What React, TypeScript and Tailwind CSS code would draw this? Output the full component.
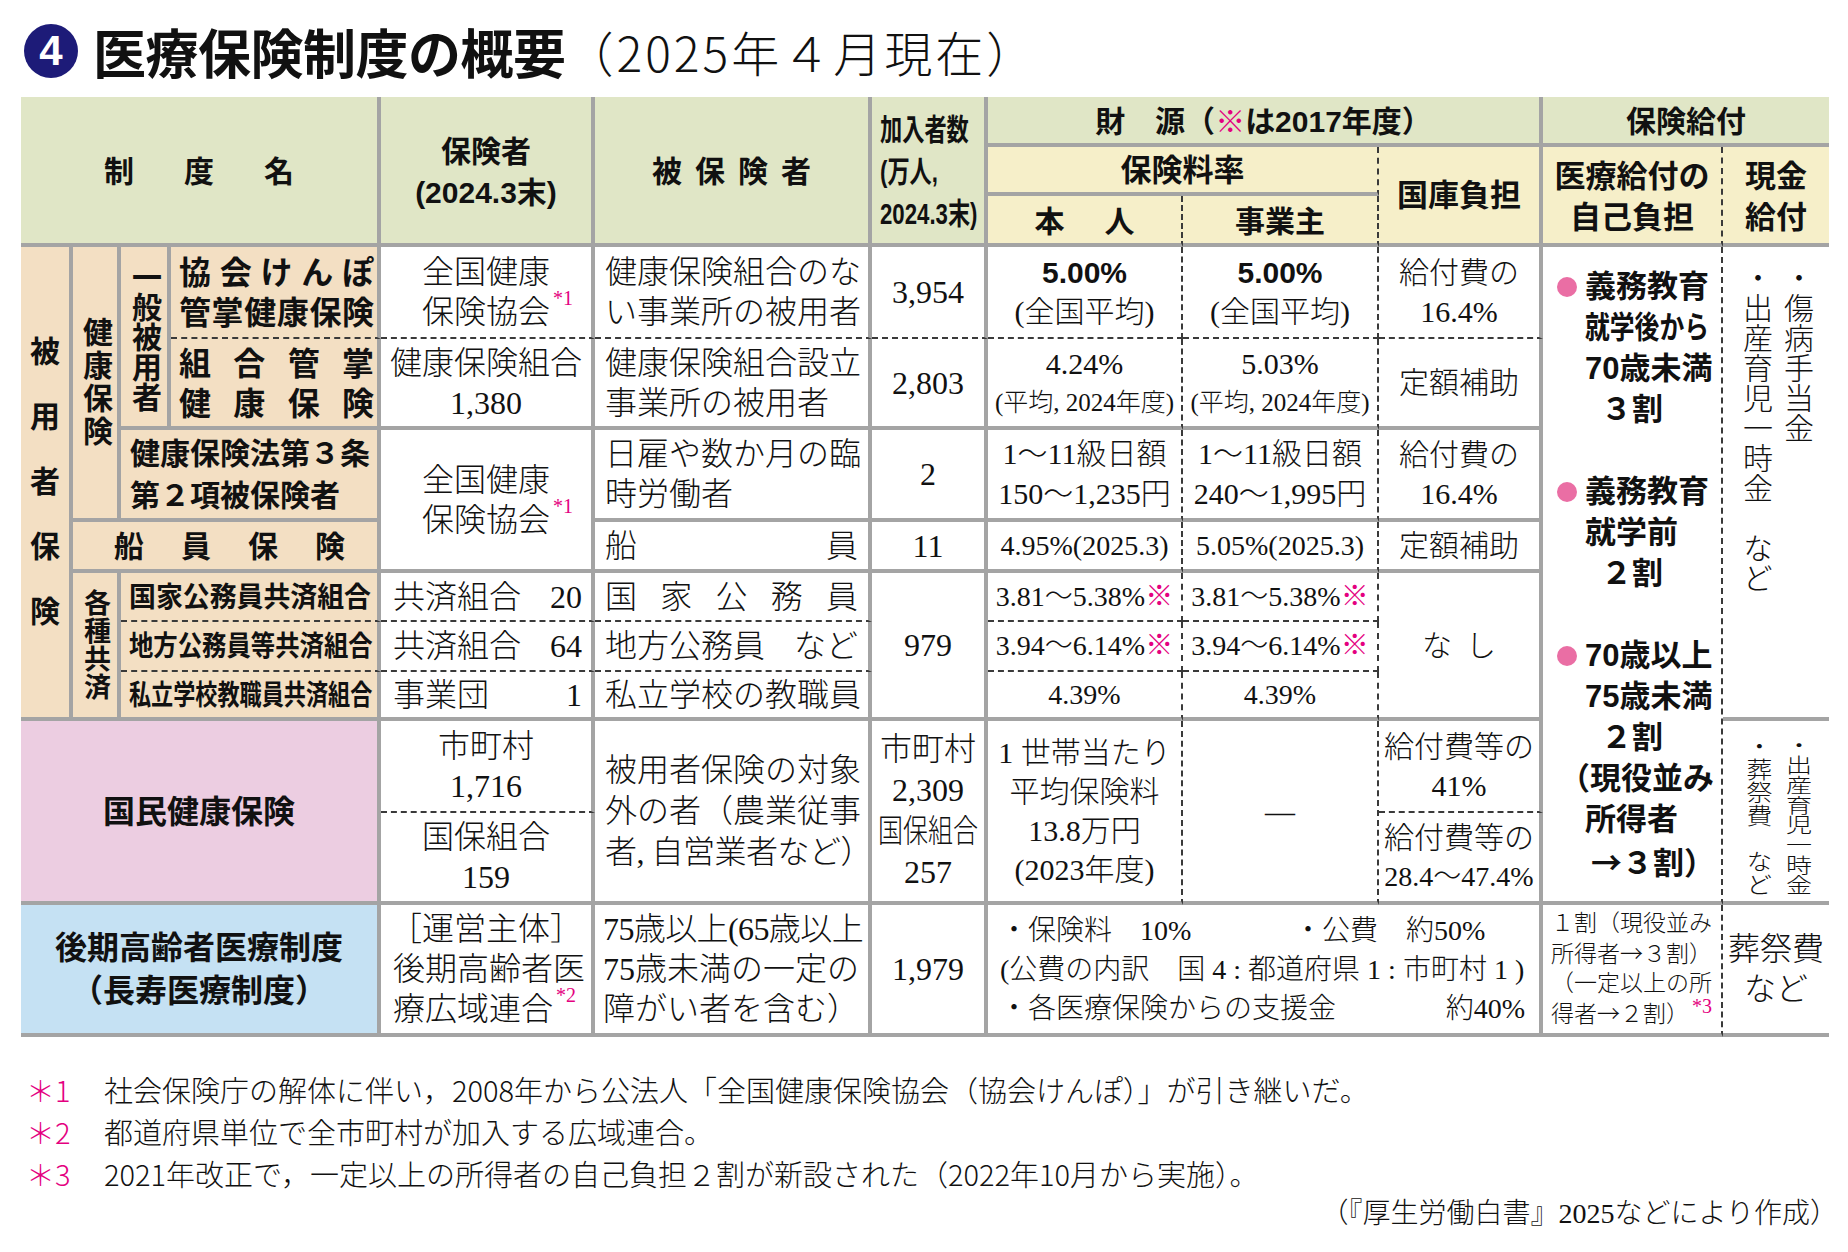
import React from "react";

const rG = "[border-right:4px_solid_#a4a4a4]";
const rD = "[border-right:2px_dashed_#3a3a3a]";
const bG = "[border-bottom:4px_solid_#a4a4a4]";
const bD = "[border-bottom:2px_dashed_#3a3a3a]";
const SERIF = "font-['Liberation_Serif','Noto_Sans_CJK_JP',serif] font-light";
const SANS = "font-['Liberation_Sans','Noto_Sans_CJK_JP',sans-serif] font-bold";
const NUMB = "font-['Liberation_Sans','Noto_Sans_CJK_JP',sans-serif] font-bold";
const GREEN = "bg-[#e0e6c6]";
const YEL = "bg-[#f6efc9]";
const BEI = "bg-[#f3dfc3]";
const VERT = "[writing-mode:vertical-rl] whitespace-nowrap";

function Cell({ c, children }: { c: string; children?: React.ReactNode }) {
  return <div className={`flex flex-col justify-center ${c}`}>{children}</div>;
}

function Sup({ t }: { t: string }) {
  return (
    <span className="absolute left-full top-[-6px] ml-[3px] text-[20px] leading-none text-[#e4007f] whitespace-nowrap">
      {t}
    </span>
  );
}

function Pink({ children }: { children: React.ReactNode }) {
  return <span className="text-[#e4007f]">{children}</span>;
}

function Arrow() {
  return <span className="font-['Noto_Sans_CJK_JP',sans-serif]">→</span>;
}

function Spread({ t, c }: { t: string; c?: string }) {
  return (
    <div className={`flex justify-between ${c ?? ""}`}>
      {t.split("").map((ch, i) => (
        <span key={i}>{ch}</span>
      ))}
    </div>
  );
}

function BLine({ children }: { children: React.ReactNode }) {
  return (
    <div className="flex items-center h-[41px] whitespace-nowrap">
      <span className="w-[20px] h-[20px] rounded-full bg-[#ea6ea4] ml-[14px] mr-[8px] shrink-0" />
      {children}
    </div>
  );
}

export default function App() {
  return (
    <div className="w-[1848px] h-[1252px] bg-white text-[#111] overflow-hidden">
      {/* Title */}
      <div className="flex items-center pl-[24px] pt-[24px] h-[78px]">
        <div className="w-[54px] h-[54px] rounded-full bg-[#1d1b78] text-white flex items-center justify-center text-[42px] font-bold font-['Liberation_Sans',sans-serif] leading-none">
          4
        </div>
        <div className="font-['Noto_Sans_CJK_JP',sans-serif] font-bold text-[53px] leading-none ml-[15px] tracking-[-0.5px]">医療保険制度の概要</div>
        <div className="font-['Noto_Sans_CJK_JP',sans-serif] font-light text-[48px] leading-none tracking-[3px]">（2025年４月現在）</div>
      </div>

      {/* Table */}
      <div className="ml-[21px] mt-[19px] w-[1808px] grid grid-cols-[52px_48px_50px_210px_214px_277px_116px_195px_196px_164px_180px_106px] grid-rows-[50px_49px_51px_92px_91px_92px_51px_49px_50px_49px_92px_92px_132px]">
        {/* ===== Header ===== */}
        <Cell c={`col-start-1 col-span-4 row-start-1 row-span-3 ${GREEN} ${rG} ${bG} ${SANS} text-[30px] items-center pt-[3px]`}>
          <div className="flex gap-[50px]">
            <span>制</span>
            <span>度</span>
            <span>名</span>
          </div>
        </Cell>
        <Cell c={`col-start-5 row-start-1 row-span-3 ${GREEN} ${rG} ${bG} ${SANS} text-[30px] leading-[41px] items-center pt-[3px]`}>
          <div>保険者</div>
          <div>(2024.3末)</div>
        </Cell>
        <Cell c={`col-start-6 row-start-1 row-span-3 ${GREEN} ${rG} ${bG} ${SANS} text-[30px] items-center pt-[3px]`}>
          <div className="flex gap-[13px]">
            <span>被</span>
            <span>保</span>
            <span>険</span>
            <span>者</span>
          </div>
        </Cell>
        <Cell c={`col-start-7 row-start-1 row-span-3 ${GREEN} ${rG} ${bG} ${SANS} text-[30px] leading-[42px] items-start pl-[8px] pt-[3px]`}>
          <div className="origin-left scale-x-[0.74] whitespace-nowrap">
            <div>加入者数</div>
            <div>(万人,</div>
            <div>2024.3末)</div>
          </div>
        </Cell>
        <Cell c={`col-start-8 col-span-3 row-start-1 ${GREEN} ${rG} ${bG} ${SANS} text-[30px] items-center pt-[3px]`}>
          <div className="whitespace-nowrap">
            財　源（<Pink>※</Pink>は2017年度）
          </div>
        </Cell>
        <Cell c={`col-start-8 col-span-2 row-start-2 ${YEL} ${rD} ${bG} ${SANS} text-[31px] items-center pt-[3px]`}>
          <div>保険料率</div>
        </Cell>
        <Cell c={`col-start-8 row-start-3 ${YEL} ${rD} ${bG} ${SANS} text-[30px] items-center pt-[3px]`}>
          <div className="flex gap-[40px]">
            <span>本</span>
            <span>人</span>
          </div>
        </Cell>
        <Cell c={`col-start-9 row-start-3 ${YEL} ${rD} ${bG} ${SANS} text-[30px] items-center pt-[3px]`}>
          <div>事業主</div>
        </Cell>
        <Cell c={`col-start-10 row-start-2 row-span-2 ${YEL} ${rG} ${bG} ${SANS} text-[31px] items-center pt-[3px]`}>
          <div>国庫負担</div>
        </Cell>
        <Cell c={`col-start-11 col-span-2 row-start-1 ${GREEN} ${bG} ${SANS} text-[30px] items-center pt-[3px]`}>
          <div>保険給付</div>
        </Cell>
        <Cell c={`col-start-11 row-start-2 row-span-2 ${YEL} ${rD} ${bG} ${SANS} text-[31px] leading-[41px] items-center pt-[3px]`}>
          <div>医療給付の</div>
          <div>自己負担</div>
        </Cell>
        <Cell c={`col-start-12 row-start-2 row-span-2 ${YEL} ${bG} ${SANS} text-[31px] leading-[41px] items-center pt-[3px]`}>
          <div>現金</div>
          <div>給付</div>
        </Cell>

        {/* ===== Left name columns ===== */}
        <Cell c={`col-start-1 row-start-4 row-span-7 ${BEI} ${rG} ${bG} ${SANS} text-[30px] leading-none items-center gap-[35px]`}>
          <div>被</div>
          <div>用</div>
          <div>者</div>
          <div>保</div>
          <div>険</div>
        </Cell>
        <Cell c={`col-start-2 row-start-4 row-span-3 ${BEI} ${rG} ${bG} ${SANS} text-[30px] items-center`}>
          <div className={`${VERT} leading-[34px] tracking-[3px]`}>健康保険</div>
        </Cell>
        <Cell c={`col-start-3 row-start-4 row-span-2 ${BEI} ${rG} ${bG} ${SANS} text-[30px] items-center`}>
          <div className={`${VERT} leading-[34px]`}>一般被用者</div>
        </Cell>
        <Cell c={`col-start-4 row-start-4 ${BEI} ${rG} ${bD} ${SANS} text-[32px] leading-[40px] pl-[8px] pr-[3px] pt-[2px]`}>
          <Spread t="協会けんぽ" />
          <Spread t="管掌健康保険" />
        </Cell>
        <Cell c={`col-start-4 row-start-5 ${BEI} ${rG} ${bG} ${SANS} text-[32px] leading-[40px] pl-[8px] pr-[3px] pt-[2px]`}>
          <Spread t="組合管掌" />
          <Spread t="健康保険" />
        </Cell>
        <Cell c={`col-start-3 col-span-2 row-start-6 ${BEI} ${rG} ${bG} ${SANS} text-[30px] leading-[42px] pl-[9px] pt-[2px] whitespace-nowrap`}>
          <div>健康保険法第３条</div>
          <div>第２項被保険者</div>
        </Cell>
        <Cell c={`col-start-2 col-span-3 row-start-7 ${BEI} ${rG} ${bG} ${SANS} text-[30px] pl-[41px] pr-[32px] pt-[2px]`}>
          <Spread t="船員保険" />
        </Cell>
        <Cell c={`col-start-2 row-start-8 row-span-3 ${BEI} ${rG} ${bG} ${SANS} text-[27px] items-center`}>
          <div className={`${VERT} leading-[32px] tracking-[1px]`}>各種共済</div>
        </Cell>
        <Cell c={`col-start-3 col-span-2 row-start-8 ${BEI} ${rG} ${bD} ${SANS} text-[28px] pl-[8px] pt-[2px] whitespace-nowrap`}>
          <div>
            <span className="inline-block origin-left scale-x-[0.96]">国家公務員共済組合</span>
          </div>
        </Cell>
        <Cell c={`col-start-3 col-span-2 row-start-9 ${BEI} ${rG} ${bD} ${SANS} text-[28px] pl-[8px] pt-[2px] whitespace-nowrap`}>
          <div>
            <span className="inline-block origin-left scale-x-[0.87]">地方公務員等共済組合</span>
          </div>
        </Cell>
        <Cell c={`col-start-3 col-span-2 row-start-10 ${BEI} ${rG} ${bG} ${SANS} text-[28px] pl-[8px] pt-[2px] whitespace-nowrap`}>
          <div>
            <span className="inline-block origin-left scale-x-[0.79]">私立学校教職員共済組合</span>
          </div>
        </Cell>
        <Cell c={`col-start-1 col-span-4 row-start-11 row-span-2 bg-[#eccde1] ${rG} ${bG} ${SANS} text-[32px] items-center pt-[2px]`}>
          <div>国民健康保険</div>
        </Cell>
        <Cell c={`col-start-1 col-span-4 row-start-13 bg-[#c5e1f3] ${rG} ${bG} ${SANS} text-[32px] leading-[43px] items-center pt-[2px]`}>
          <div>後期高齢者医療制度</div>
          <div>（長寿医療制度）</div>
        </Cell>

        {/* ===== 保険者 column ===== */}
        <Cell c={`col-start-5 row-start-4 ${rG} ${bD} ${SERIF} text-[32px] leading-[40px] items-center`}>
          <div>全国健康</div>
          <div>
            <span className="relative">
              保険協会
              <Sup t="*1" />
            </span>
          </div>
        </Cell>
        <Cell c={`col-start-5 row-start-5 ${rG} ${bG} ${SERIF} text-[32px] leading-[40px] items-center`}>
          <div>健康保険組合</div>
          <div>1,380</div>
        </Cell>
        <Cell c={`col-start-5 row-start-6 row-span-2 ${rG} ${bG} ${SERIF} text-[32px] leading-[40px] items-center`}>
          <div>全国健康</div>
          <div>
            <span className="relative">
              保険協会
              <Sup t="*1" />
            </span>
          </div>
        </Cell>
        <Cell c={`col-start-5 row-start-8 ${rG} ${bD} ${SERIF} text-[32px] pl-[12px] pr-[9px]`}>
          <div className="flex justify-between">
            <span>共済組合</span>
            <span>20</span>
          </div>
        </Cell>
        <Cell c={`col-start-5 row-start-9 ${rG} ${bD} ${SERIF} text-[32px] pl-[12px] pr-[9px]`}>
          <div className="flex justify-between">
            <span>共済組合</span>
            <span>64</span>
          </div>
        </Cell>
        <Cell c={`col-start-5 row-start-10 ${rG} ${bG} ${SERIF} text-[32px] pl-[12px] pr-[9px]`}>
          <div className="flex justify-between">
            <span>事業団</span>
            <span>1</span>
          </div>
        </Cell>
        <Cell c={`col-start-5 row-start-11 ${rG} ${bD} ${SERIF} text-[32px] leading-[40px] items-center`}>
          <div>市町村</div>
          <div>1,716</div>
        </Cell>
        <Cell c={`col-start-5 row-start-12 ${rG} ${bG} ${SERIF} text-[32px] leading-[40px] items-center`}>
          <div>国保組合</div>
          <div>159</div>
        </Cell>
        <Cell c={`col-start-5 row-start-13 ${rG} ${bG} ${SERIF} text-[32px] leading-[40px]`}>
          <div className="text-center">［運営主体］</div>
          <div className="pl-[12px] whitespace-nowrap">後期高齢者医</div>
          <div className="pl-[12px] whitespace-nowrap">
            <span className="relative">
              療広域連合
              <Sup t="*2" />
            </span>
          </div>
        </Cell>

        {/* ===== 被保険者 column ===== */}
        <Cell c={`col-start-6 row-start-4 ${rG} ${bD} ${SERIF} text-[32px] leading-[40px] pl-[10px] whitespace-nowrap`}>
          <div>健康保険組合のな</div>
          <div>い事業所の被用者</div>
        </Cell>
        <Cell c={`col-start-6 row-start-5 ${rG} ${bG} ${SERIF} text-[32px] leading-[40px] pl-[10px] whitespace-nowrap`}>
          <div>健康保険組合設立</div>
          <div>事業所の被用者</div>
        </Cell>
        <Cell c={`col-start-6 row-start-6 ${rG} ${bG} ${SERIF} text-[32px] leading-[40px] pl-[10px] whitespace-nowrap`}>
          <div>日雇や数か月の臨</div>
          <div>時労働者</div>
        </Cell>
        <Cell c={`col-start-6 row-start-7 ${rG} ${bG} ${SERIF} text-[32px] pl-[10px] pr-[10px]`}>
          <Spread t="船員" />
        </Cell>
        <Cell c={`col-start-6 row-start-8 ${rG} ${bD} ${SERIF} text-[32px] pl-[10px] pr-[10px]`}>
          <Spread t="国家公務員" />
        </Cell>
        <Cell c={`col-start-6 row-start-9 ${rG} ${bD} ${SERIF} text-[32px] pl-[10px] pr-[10px]`}>
          <div className="flex justify-between">
            <span>地方公務員</span>
            <span>など</span>
          </div>
        </Cell>
        <Cell c={`col-start-6 row-start-10 ${rG} ${bG} ${SERIF} text-[32px] pl-[10px] whitespace-nowrap`}>
          <div>私立学校の教職員</div>
        </Cell>
        <Cell c={`col-start-6 row-start-11 row-span-2 ${rG} ${bG} ${SERIF} text-[32px] leading-[41px] pl-[10px] whitespace-nowrap`}>
          <div>被用者保険の対象</div>
          <div>外の者（農業従事</div>
          <div className="tracking-[-0.5px]">者, 自営業者など）</div>
        </Cell>
        <Cell c={`col-start-6 row-start-13 ${rG} ${bG} ${SERIF} text-[32px] leading-[40px] pl-[8px] whitespace-nowrap`}>
          <div className="tracking-[-0.6px]">75歳以上(65歳以上</div>
          <div>75歳未満の一定の</div>
          <div>障がい者を含む）</div>
        </Cell>

        {/* ===== 加入者数 column ===== */}
        <Cell c={`col-start-7 row-start-4 ${rG} ${bD} ${SERIF} text-[32px] items-center`}>
          <div>3,954</div>
        </Cell>
        <Cell c={`col-start-7 row-start-5 ${rG} ${bG} ${SERIF} text-[32px] items-center`}>
          <div>2,803</div>
        </Cell>
        <Cell c={`col-start-7 row-start-6 ${rG} ${bG} ${SERIF} text-[32px] items-center`}>
          <div>2</div>
        </Cell>
        <Cell c={`col-start-7 row-start-7 ${rG} ${bG} ${SERIF} text-[32px] items-center`}>
          <div>11</div>
        </Cell>
        <Cell c={`col-start-7 row-start-8 row-span-3 ${rG} ${bG} ${SERIF} text-[32px] items-center`}>
          <div>979</div>
        </Cell>
        <Cell c={`col-start-7 row-start-11 row-span-2 ${rG} ${bG} ${SERIF} text-[32px] leading-[41px] items-center`}>
          <div>市町村</div>
          <div>2,309</div>
          <div className="scale-x-[0.78] whitespace-nowrap">国保組合</div>
          <div>257</div>
        </Cell>
        <Cell c={`col-start-7 row-start-13 ${rG} ${bG} ${SERIF} text-[32px] items-center`}>
          <div>1,979</div>
        </Cell>

        {/* ===== 本人 / 事業主 ===== */}
        <Cell c={`col-start-8 row-start-4 ${rD} ${bD} ${SERIF} text-[30px] leading-[39px] items-center`}>
          <div className={`${NUMB} text-[30px]`}>5.00%</div>
          <div>(全国平均)</div>
        </Cell>
        <Cell c={`col-start-9 row-start-4 ${rD} ${bD} ${SERIF} text-[30px] leading-[39px] items-center`}>
          <div className={`${NUMB} text-[30px]`}>5.00%</div>
          <div>(全国平均)</div>
        </Cell>
        <Cell c={`col-start-8 row-start-5 ${rD} ${bG} ${SERIF} leading-[39px] items-center whitespace-nowrap`}>
          <div className="text-[30px]">4.24%</div>
          <div className="text-[25px]">(平均, 2024年度)</div>
        </Cell>
        <Cell c={`col-start-9 row-start-5 ${rD} ${bG} ${SERIF} leading-[39px] items-center whitespace-nowrap`}>
          <div className="text-[30px]">5.03%</div>
          <div className="text-[25px]">(平均, 2024年度)</div>
        </Cell>
        <Cell c={`col-start-8 row-start-6 ${rD} ${bG} ${SERIF} text-[30px] leading-[40px] items-center whitespace-nowrap`}>
          <div>1〜11級日額</div>
          <div>150〜1,235円</div>
        </Cell>
        <Cell c={`col-start-9 row-start-6 ${rD} ${bG} ${SERIF} text-[30px] leading-[40px] items-center whitespace-nowrap`}>
          <div>1〜11級日額</div>
          <div>240〜1,995円</div>
        </Cell>
        <Cell c={`col-start-8 row-start-7 ${rD} ${bG} ${SERIF} text-[28px] items-center whitespace-nowrap`}>
          <div>4.95%(2025.3)</div>
        </Cell>
        <Cell c={`col-start-9 row-start-7 ${rD} ${bG} ${SERIF} text-[28px] items-center whitespace-nowrap`}>
          <div>5.05%(2025.3)</div>
        </Cell>
        <Cell c={`col-start-8 row-start-8 ${rD} ${bD} ${SERIF} text-[28px] items-center whitespace-nowrap`}>
          <div>
            3.81〜5.38%<Pink>※</Pink>
          </div>
        </Cell>
        <Cell c={`col-start-9 row-start-8 ${rD} ${bD} ${SERIF} text-[28px] items-center whitespace-nowrap`}>
          <div>
            3.81〜5.38%<Pink>※</Pink>
          </div>
        </Cell>
        <Cell c={`col-start-8 row-start-9 ${rD} ${bD} ${SERIF} text-[28px] items-center whitespace-nowrap`}>
          <div>
            3.94〜6.14%<Pink>※</Pink>
          </div>
        </Cell>
        <Cell c={`col-start-9 row-start-9 ${rD} ${bD} ${SERIF} text-[28px] items-center whitespace-nowrap`}>
          <div>
            3.94〜6.14%<Pink>※</Pink>
          </div>
        </Cell>
        <Cell c={`col-start-8 row-start-10 ${rD} ${bG} ${SERIF} text-[28px] items-center`}>
          <div>4.39%</div>
        </Cell>
        <Cell c={`col-start-9 row-start-10 ${rD} ${bG} ${SERIF} text-[28px] items-center`}>
          <div>4.39%</div>
        </Cell>
        <Cell c={`col-start-8 row-start-11 row-span-2 ${rD} ${bG} ${SERIF} text-[30px] leading-[39px] items-center whitespace-nowrap`}>
          <div>1 世帯当たり</div>
          <div>平均保険料</div>
          <div>13.8万円</div>
          <div>(2023年度)</div>
        </Cell>
        <Cell c={`col-start-9 row-start-11 row-span-2 ${rD} ${bG} ${SERIF} text-[30px] items-center`}>
          <div>—</div>
        </Cell>
        <Cell c={`col-start-8 col-span-3 row-start-13 ${rG} ${bG} ${SERIF} text-[28px] leading-[39px] pl-[12px] pr-[14px] whitespace-pre`}>
          <div className="flex">
            <span className="w-[294px]">・保険料　10%</span>
            <span>・公費　約50%</span>
          </div>
          <div>(公費の内訳　国 4 : 都道府県 1 : 市町村 1 )</div>
          <div className="flex justify-between">
            <span>・各医療保険からの支援金</span>
            <span>約40%</span>
          </div>
        </Cell>

        {/* ===== 国庫負担 ===== */}
        <Cell c={`col-start-10 row-start-4 ${rG} ${bD} ${SERIF} text-[30px] leading-[39px] items-center`}>
          <div>給付費の</div>
          <div>16.4%</div>
        </Cell>
        <Cell c={`col-start-10 row-start-5 ${rG} ${bG} ${SERIF} text-[30px] items-center`}>
          <div>定額補助</div>
        </Cell>
        <Cell c={`col-start-10 row-start-6 ${rG} ${bG} ${SERIF} text-[30px] leading-[39px] items-center`}>
          <div>給付費の</div>
          <div>16.4%</div>
        </Cell>
        <Cell c={`col-start-10 row-start-7 ${rG} ${bG} ${SERIF} text-[30px] items-center`}>
          <div>定額補助</div>
        </Cell>
        <Cell c={`col-start-10 row-start-8 row-span-3 ${rG} ${bG} ${SERIF} text-[30px] items-center`}>
          <div className="flex gap-[14px]">
            <span>な</span>
            <span>し</span>
          </div>
        </Cell>
        <Cell c={`col-start-10 row-start-11 ${rG} ${bD} ${SERIF} text-[30px] leading-[39px] items-center whitespace-nowrap`}>
          <div>給付費等の</div>
          <div>41%</div>
        </Cell>
        <Cell c={`col-start-10 row-start-12 ${rG} ${bG} ${SERIF} text-[30px] leading-[39px] items-center whitespace-nowrap`}>
          <div>給付費等の</div>
          <div className="text-[28px]">28.4〜47.4%</div>
        </Cell>

        {/* ===== 医療給付の自己負担 ===== */}
        <Cell c={`col-start-11 row-start-4 row-span-9 ${rD} ${bG} ${SANS} text-[31px] leading-[41px] pt-[2px]`}>
          <BLine>義務教育</BLine>
          <div className="pl-[42px] whitespace-nowrap">
            <span className="inline-block origin-left scale-x-[0.8]">就学後から</span>
          </div>
          <div className="pl-[42px] whitespace-nowrap">70歳未満</div>
          <div className="text-center">３割</div>
          <div className="h-[41px]" />
          <BLine>義務教育</BLine>
          <div className="pl-[42px] whitespace-nowrap">就学前</div>
          <div className="text-center">２割</div>
          <div className="h-[41px]" />
          <BLine>70歳以上</BLine>
          <div className="pl-[42px] whitespace-nowrap">75歳未満</div>
          <div className="text-center">２割</div>
          <div className="pl-[16px] whitespace-nowrap">（現役並み</div>
          <div className="pl-[42px] whitespace-nowrap">所得者</div>
          <div className="pl-[48px] whitespace-nowrap">
            <Arrow />３割）
          </div>
        </Cell>
        <Cell c={`col-start-11 row-start-13 ${rD} ${bG} ${SERIF} text-[23px] leading-[29px] pl-[8px] whitespace-nowrap`}>
          <div>１割（現役並み</div>
          <div>
            所得者<Arrow />３割）
          </div>
          <div>（一定以上の所</div>
          <div>
            <span className="relative">
              得者<Arrow />２割）
              <Sup t="*3" />
            </span>
          </div>
        </Cell>

        {/* ===== 現金給付 ===== */}
        <div className={`col-start-12 row-start-4 row-span-7 ${bG} flex justify-center items-start pt-[16px]`}>
          <div className={`${VERT} ${SERIF} text-[30px] leading-[41px]`}>
            ・傷病手当金
            <br />
            ・出産育児一時金　など
          </div>
        </div>
        <div className={`col-start-12 row-start-11 row-span-2 ${bG} flex flex-row-reverse justify-center items-start gap-[15px] pt-[14px]`}>
          <div className={`${VERT} ${SERIF} text-[20px] leading-[26px] scale-x-[1.3]`}>・出産育児一時金</div>
          <div className={`${VERT} ${SERIF} text-[23px] leading-[26px] scale-x-[1.12]`}>・葬祭費　など</div>
        </div>
        <Cell c={`col-start-12 row-start-13 ${bG} ${SERIF} text-[32px] leading-[40px] items-center`}>
          <div>葬祭費</div>
          <div>など</div>
        </Cell>
      </div>

      {/* Footnotes */}
      <div className="mt-[31px] pl-[26px] font-['Noto_Sans_CJK_JP',sans-serif] font-light text-[29px] leading-[42px] whitespace-nowrap">
        <div className="flex">
          <span className="w-[78px] text-[#e4007f]">＊1</span>
          <span>社会保険庁の解体に伴い，2008年から公法人「全国健康保険協会（協会けんぽ）」が引き継いだ。</span>
        </div>
        <div className="flex">
          <span className="w-[78px] text-[#e4007f]">＊2</span>
          <span>都道府県単位で全市町村が加入する広域連合。</span>
        </div>
        <div className="flex">
          <span className="w-[78px] text-[#e4007f]">＊3</span>
          <span>2021年改正で，一定以上の所得者の自己負担２割が新設された（2022年10月から実施）。</span>
        </div>
      </div>
      <div className={`text-right pr-[10px] ${SERIF} text-[28px] leading-[40px]`}>（『厚生労働白書』2025などにより作成）</div>
    </div>
  );
}
